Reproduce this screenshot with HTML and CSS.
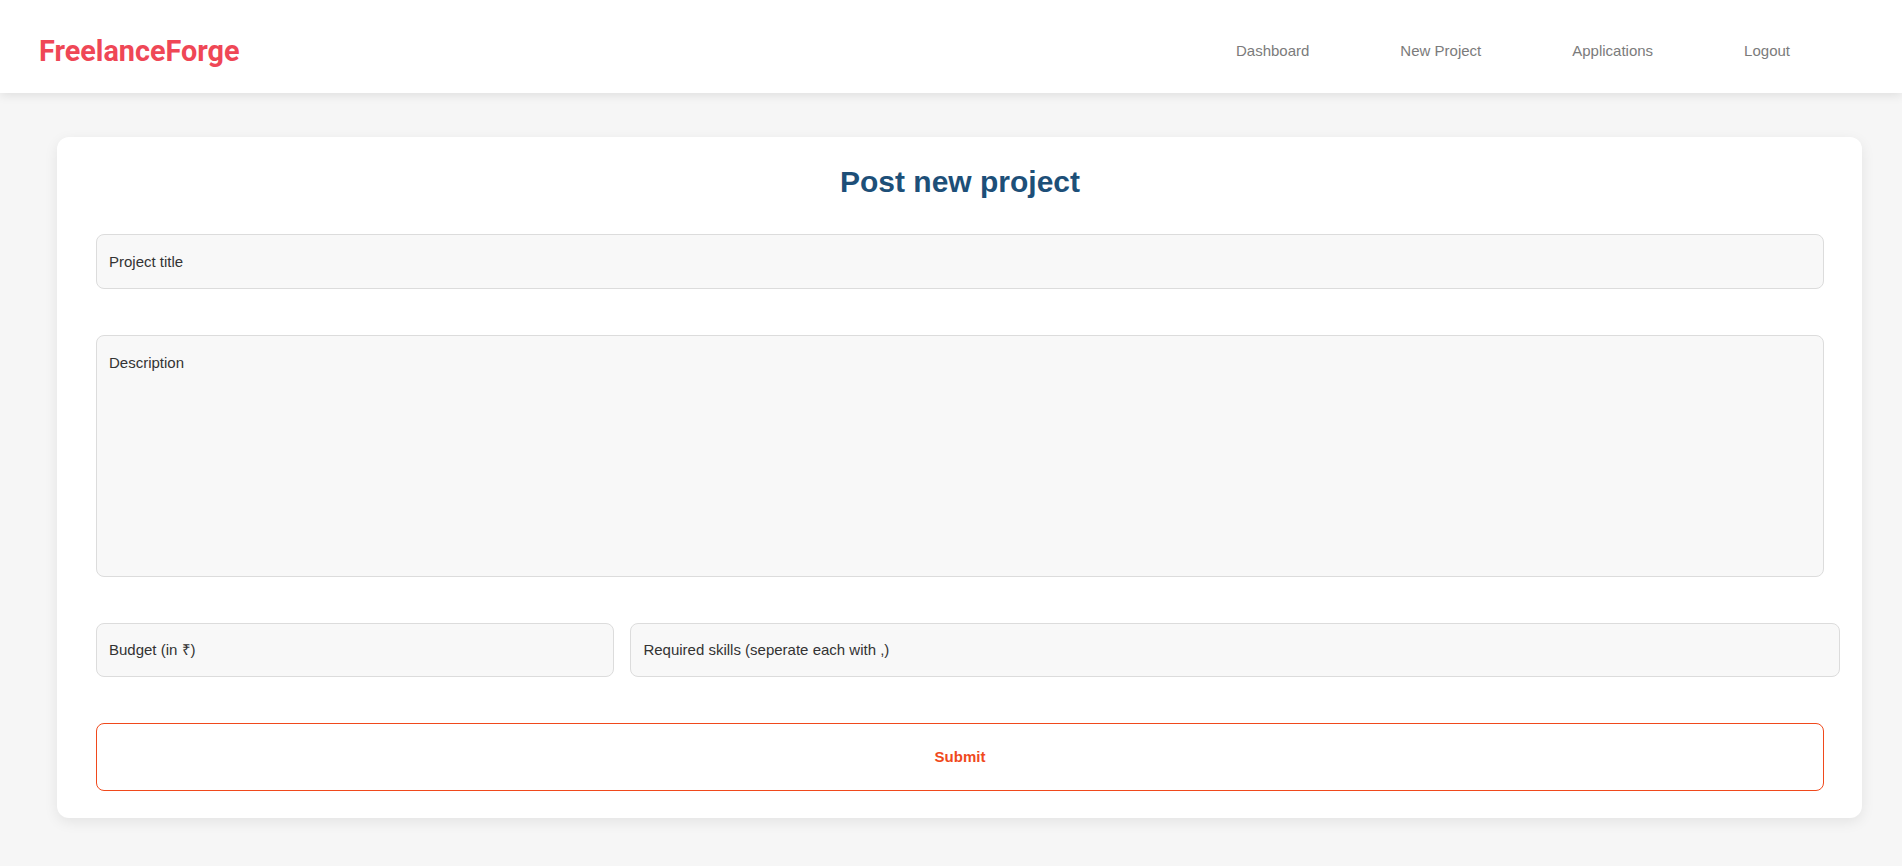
FILE: index.html
```html
<!DOCTYPE html>
<html lang="en">
<head>
<meta charset="utf-8">
<title>FreelanceForge - Post new project</title>
<link rel="stylesheet" href="styles.css">
</head>
<body>
<header class="topbar">
  <div class="logo">FreelanceForge</div>
  <nav class="nav">
    <a href="#">Dashboard</a>
    <a href="#">New Project</a>
    <a href="#">Applications</a>
    <a href="#">Logout</a>
  </nav>
</header>
<main class="card">
  <h1 class="title">Post new project</h1>
  <form class="form">
    <input class="field field-title" type="text" placeholder="Project title">
    <textarea class="field field-desc" placeholder="Description"></textarea>
    <div class="row">
      <input class="field field-budget" type="text" placeholder="Budget (in ₹)">
      <input class="field field-skills" type="text" placeholder="Required skills (seperate each with ,)">
    </div>
    <button class="submit" type="button">Submit</button>
  </form>
</main>
</body>
</html>
```

FILE: styles.css
```css
* { box-sizing: border-box; }

html, body {
  margin: 0;
  padding: 0;
  background: #f6f6f6;
  font-family: "Liberation Sans", Arial, sans-serif;
  overflow: hidden;
}

.topbar {
  height: 93px;
  background: #ffffff;
  display: flex;
  align-items: center;
  padding: 8px 112px 0 39px;
  box-shadow: 0 2px 10px rgba(0, 0, 0, 0.1);
  position: relative;
  z-index: 1;
}

.logo {
  font-family: Roboto, "Liberation Sans", sans-serif;
  font-weight: 700;
  font-size: 28.8px;
  color: #ef4756;
}

.nav {
  margin-left: auto;
  display: flex;
  gap: 91px;
}

.nav a {
  font-size: 15px;
  color: #7b7b7b;
  text-decoration: none;
}

.card {
  display: block;
  margin: 44px 40px 40px 57px;
  background: #ffffff;
  border-radius: 12px;
  padding: 28px 38px 27px 39px;
  box-shadow: 0 4px 14px rgba(0, 0, 0, 0.08);
}

.title {
  margin: 0 0 34px;
  text-align: center;
  font-size: 30px;
  font-weight: 700;
  color: #1d4f78;
  line-height: 34.5px;
}

.form {
  display: flex;
  flex-direction: column;
  gap: 46px;
}

.field {
  display: block;
  width: 100%;
  font-family: "Liberation Sans", Arial, sans-serif;
  font-size: 15px;
  color: #333;
  background: #f8f8f8;
  border: 1px solid #dcdcdc;
  border-radius: 8px;
  padding: 18px 12px;
  outline: none;
  margin: 0;
}

.field::placeholder { color: #333; opacity: 1; }

.field-title { height: 55px; }

.field-desc {
  height: 242px;
  resize: none;
  line-height: 17px;
}

.row {
  display: flex;
}

.row .field { height: 54px; flex-shrink: 0; }

.field-budget { width: 30%; }

.field-skills { width: 70%; margin-left: 16px; }

.submit {
  display: block;
  width: 100%;
  height: 68px;
  background: #ffffff;
  border: 1px solid #f0491c;
  border-radius: 8px;
  color: #f0491c;
  font-family: "Liberation Sans", Arial, sans-serif;
  font-weight: 700;
  font-size: 15px;
  cursor: pointer;
}
```
